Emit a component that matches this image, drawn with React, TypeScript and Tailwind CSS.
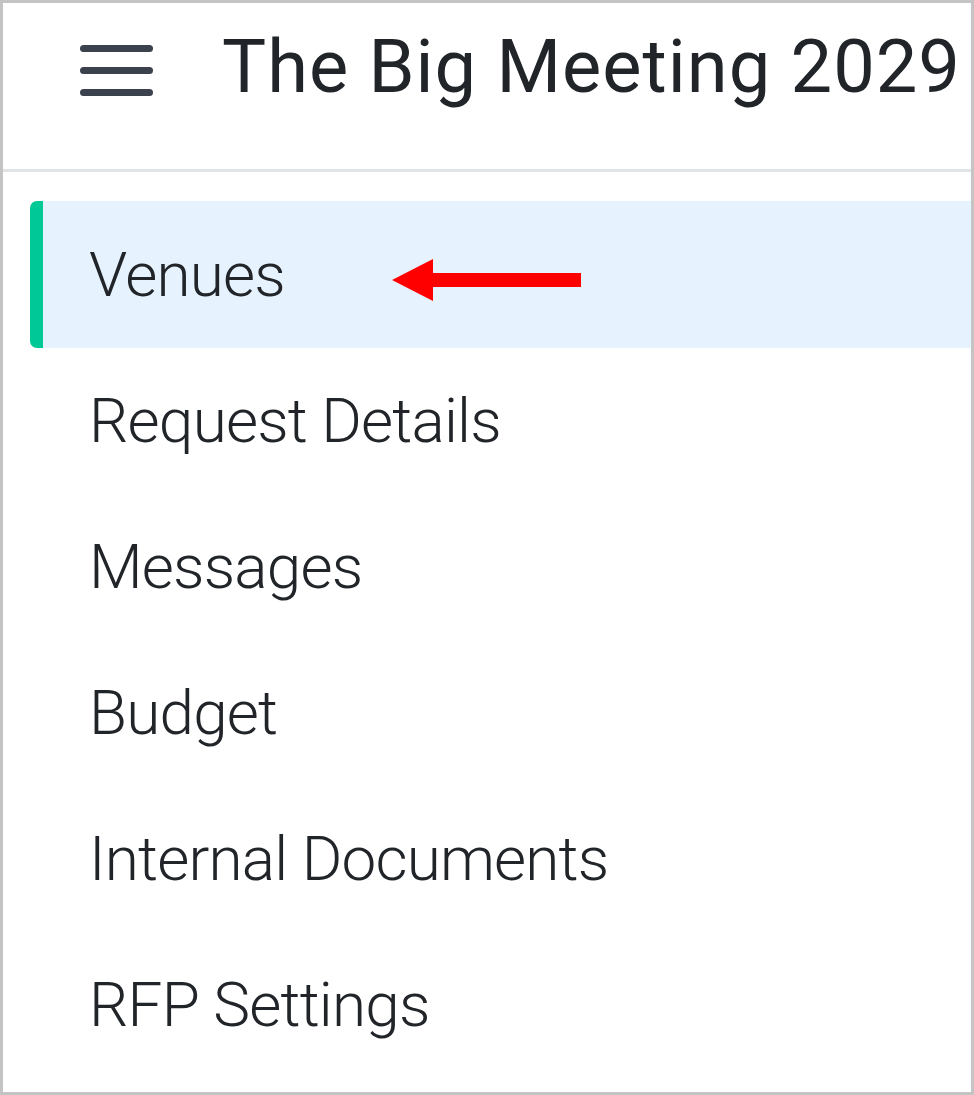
import React from "react";

const items = ["Venues", "Request Details", "Messages", "Budget", "Internal Documents", "RFP Settings"];

export default function App() {
  return (
    <div
      className="w-[974px] h-[1095px] bg-white border-[3px] border-[#c4c4c4] flex flex-col text-[#212529]"
      style={{ fontFamily: "Roboto, 'Noto Sans', sans-serif" }}
    >
      <div className="h-[169px] shrink-0 border-b-[3px] border-[#e1e4e6] flex items-center">
        <div className="ml-[77px] w-[73px] flex flex-col gap-[15px] -mt-[32px]">
          <div className="h-[7px] rounded-full bg-[#3c424d]" />
          <div className="h-[7px] rounded-full bg-[#3c424d]" />
          <div className="h-[7px] rounded-full bg-[#3c424d]" />
        </div>
        <div className="ml-[69px] text-[74px] leading-none whitespace-nowrap -mt-[38px] tracking-[1px]">
          The Big Meeting 2029
        </div>
      </div>
      <nav className="pt-[29px] flex flex-col">
        {items.map((label, i) => {
          const active = i === 0;
          return (
            <div
              key={label}
              className={
                active
                  ? "relative h-[147px] ml-[27px] flex items-center bg-[#e6f2fd] rounded-l-[7px] border-l-[13px] border-[#00c896]"
                  : "h-[146px] flex items-center"
              }
            >
              <span
                className={
                  active
                    ? "ml-[46px] text-[62px] font-light leading-none whitespace-nowrap tracking-[-0.8px]"
                    : "ml-[86px] text-[62px] font-light leading-none whitespace-nowrap tracking-[-0.8px]"
                }
              >
                {label}
              </span>
              {active && (
                <svg
                  className="absolute left-[349px] top-[58px]"
                  width="190"
                  height="44"
                  viewBox="0 0 190 44"
                >
                  <polygon points="0,21 41,0 41,14 189,14 189,28 41,28 41,42" fill="#ff0000" />
                </svg>
              )}
            </div>
          );
        })}
      </nav>
    </div>
  );
}
